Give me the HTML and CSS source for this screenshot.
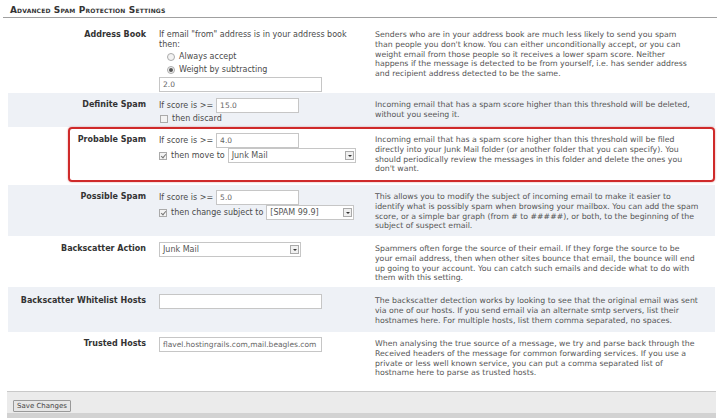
FILE: index.html
```html
<!DOCTYPE html>
<html>
<head>
  <meta charset="utf-8" />
  <title>Spam Protection</title>
  <link rel="stylesheet" href="styles.css">
</head>
<body>
  <div class="panel">
    <h2 class="panel-title">Advanced Spam Protection Settings</h2>

    <div class="row row-address">
      <div class="label">Address Book</div>
      <div class="control">
        <p class="control-text">If email "from" address is in your address book then:</p>
        <label class="opt"><span class="radio"></span>Always accept</label>
        <label class="opt"><span class="radio on"></span>Weight by subtracting</label>
        <input class="field field-wide" type="text" value="2.0">
      </div>
      <div class="help">Senders who are in your address book are much less likely to send you spam<br>
        than people you don't know. You can either unconditionally accept, or you can<br>
        weight email from those people so it receives a lower spam score. Neither<br>
        happens if the message is detected to be from yourself, i.e. has sender address<br>
        and recipient address detected to be the same.</div>
    </div>

    <div class="row alt row-definite">
      <div class="label">Definite Spam</div>
      <div class="control">
        <div class="line">If score is &gt;= <input class="field field-score" type="text" value="15.0"></div>
        <label class="opt"><span class="check"></span>then discard</label>
      </div>
      <div class="help">Incoming email that has a spam score higher than this threshold will be deleted,<br>
        without you seeing it.</div>
    </div>

    <div class="row row-probable flagged">
      <div class="label">Probable Spam</div>
      <div class="control">
        <div class="line">If score is &gt;= <input class="field field-score" type="text" value="4.0"></div>
        <div class="line"><span class="check on"></span>then move to <span class="select select-folder"><span class="select-value">Junk Mail</span><span class="select-arrow"></span></span></div>
      </div>
      <div class="help">Incoming email that has a spam score higher than this threshold will be filed<br>
        directly into your Junk Mail folder (or another folder that you can specify). You<br>
        should periodically review the messages in this folder and delete the ones you<br>
        don't want.</div>
    </div>

    <div class="row alt row-possible">
      <div class="label">Possible Spam</div>
      <div class="control">
        <div class="line">If score is &gt;= <input class="field field-score" type="text" value="5.0"></div>
        <div class="line"><span class="check on"></span>then change subject to <span class="select select-subject"><span class="select-value">[SPAM 99.9]</span><span class="select-arrow"></span></span></div>
      </div>
      <div class="help">This allows you to modify the subject of incoming email to make it easier to<br>
        identify what is possibly spam when browsing your mailbox. You can add the spam<br>
        score, or a simple bar graph (from # to #####), or both, to the beginning of the<br>
        subject of suspect email.</div>
    </div>

    <div class="row row-backscatter">
      <div class="label">Backscatter Action</div>
      <div class="control">
        <span class="select select-action"><span class="select-value">Junk Mail</span><span class="select-arrow"></span></span>
      </div>
      <div class="help">Spammers often forge the source of their email. If they forge the source to be<br>
        your email address, then when other sites bounce that email, the bounce will end<br>
        up going to your account. You can catch such emails and decide what to do with<br>
        them with this setting.</div>
    </div>

    <div class="row alt row-whitelist">
      <div class="label">Backscatter Whitelist Hosts</div>
      <div class="control">
        <input class="field field-wide" type="text" value="">
      </div>
      <div class="help">The backscatter detection works by looking to see that the original email was sent<br>
        via one of our hosts. If you send email via an alternate smtp servers, list their<br>
        hostnames here. For multiple hosts, list them comma separated, no spaces.</div>
    </div>

    <div class="row row-trusted">
      <div class="label">Trusted Hosts</div>
      <div class="control">
        <input class="field field-wide" type="text" value="flavel.hostingrails.com,mail.beagles.com">
      </div>
      <div class="help">When analysing the true source of a message, we try and parse back through the<br>
        Received headers of the message for common forwarding services. If you use a<br>
        private or less well known service, you can put a comma separated list of<br>
        hostname here to parse as trusted hosts.</div>
    </div>

    <div class="panel-footer">
      <button class="btn" type="button">Save Changes</button>
    </div>
  </div>
</body>
</html>
```

FILE: styles.css
```css
body {
  background-color: #fff;
  margin: 0;
  padding: 0;
  font-family: "DejaVu Sans", Verdana, sans-serif;
  font-size: 8px;
  color: #4a4a4a;
}
.panel {
  padding: 0 5px 0 8px;
}
.panel-title {
  font-size: 9px;
  font-variant: small-caps;
  font-weight: bold;
  letter-spacing: 0.15px;
  color: #333;
  margin: 0 -2px 0 -5px;
  padding: 6px 0 2px 7px;
  border-bottom: 1px solid #a0a0a0;
  line-height: 9px;
}
.row {
  display: grid;
  grid-template-columns: 142px 220px 1fr;
  padding: 6px 0 4px;
  box-sizing: border-box;
}
.row.alt {
  background-color: #eef1f6;
}
.row.flagged {
  position: relative;
}
/* red highlight round the probable spam row */
.row.flagged::after {
  content: "";
  position: absolute;
  left: 60px;
  right: 0;
  top: 0;
  bottom: 3px;
  border: 2px solid #cf2a2a;
  border-radius: 4px;
  box-shadow: 0 0 2px rgba(180, 0, 0, 0.45);
}
.label {
  text-align: right;
  font-weight: bold;
  font-size: 8px;
  color: #333;
  padding-right: 4px;
  line-height: 13px;
}
.control {
  padding: 0 14px 0 9px;
  line-height: 10px;
}
.control-text {
  margin: 0;
  padding-top: 2px;
}
.help {
  padding: 2px 0 0 5px;
  font-size: 7.8px;
  line-height: 9.8px;
  color: #555;
  white-space: nowrap;
}
.line {
  display: flex;
  align-items: center;
  height: 15px;
  white-space: nowrap;
}
.opt {
  display: flex;
  align-items: center;
  height: 12px;
  padding-left: 1px;
}
.row-address .opt {
  padding-left: 8px;
  height: 13px;
}
.field {
  font-family: "DejaVu Sans", Verdana, sans-serif;
  font-size: 7.5px;
  color: #666;
  border: 1px solid #c6c6c6;
  background: #fff;
  height: 15px;
  box-sizing: border-box;
  padding: 0 3px;
  margin: 0;
  outline: none;
}
.field-wide {
  width: 163px;
}
.field-score {
  width: 83px;
  margin-left: 3px;
}
.row-address .field {
  margin-top: 1px;
}
.radio,
.check {
  display: inline-block;
  flex: none;
  box-sizing: border-box;
  width: 8px;
  height: 8px;
  margin-right: 4px;
  border: 1px solid #aaa;
  background: #f3f3f3;
  position: relative;
}
.radio {
  border-radius: 50%;
}
.radio.on::after {
  content: "";
  position: absolute;
  left: 1px;
  top: 1px;
  width: 4px;
  height: 4px;
  border-radius: 50%;
  background: #555;
}
.check.on::after {
  content: "";
  position: absolute;
  left: 2px;
  top: 0;
  width: 2px;
  height: 4px;
  border: solid #777;
  border-width: 0 1px 1px 0;
  transform: rotate(40deg);
}
.select {
  display: inline-flex;
  align-items: center;
  box-sizing: border-box;
  height: 15px;
  border: 1px solid #c6c6c6;
  background: #fff;
  margin-left: 3px;
  padding: 0 1px 0 3px;
  font-size: 8px;
  color: #555;
}
.select-value {
  flex: 1;
}
.select-arrow {
  width: 9px;
  height: 9px;
  box-sizing: border-box;
  border: 1px solid #aaa;
  background: #f0f0f0;
  position: relative;
}
.select-arrow::after {
  content: "";
  position: absolute;
  left: 2px;
  top: 3px;
  border-left: 2px solid transparent;
  border-right: 2px solid transparent;
  border-top: 2px solid #333;
}
.select-folder {
  width: 137px;
}
.select-subject {
  width: 88px;
}
.select-action {
  width: 142px;
  margin: 0;
}
.row-address {
  height: 75px;
  padding-top: 10px;
}
.row-definite {
  height: 34px;
  padding-top: 5px;
}
.row-probable {
  height: 58px;
}
.row-possible {
  height: 51px;
  padding-top: 5px;
}
.row-backscatter {
  height: 51px;
}
.row-whitelist {
  height: 45px;
  padding-top: 7px;
}
.row-trusted {
  height: 56px;
  padding-top: 5px;
}
.panel-footer {
  margin: 3px -1px 0 -1px;
  padding: 8px 6px 0;
  height: 27px;
  box-sizing: border-box;
  background: #ebebeb;
  border-top: 1px solid #c9c9c9;
  border-bottom: 5px solid #d2d2d2;
}
.btn {
  font-family: "DejaVu Sans", Verdana, sans-serif;
  font-size: 7px;
  color: #444;
  height: 12px;
  width: 58px;
  padding: 0;
  line-height: 10px;
  background: #e6e6e6;
  border: 1px solid #999;
  border-radius: 1px;
}
```
